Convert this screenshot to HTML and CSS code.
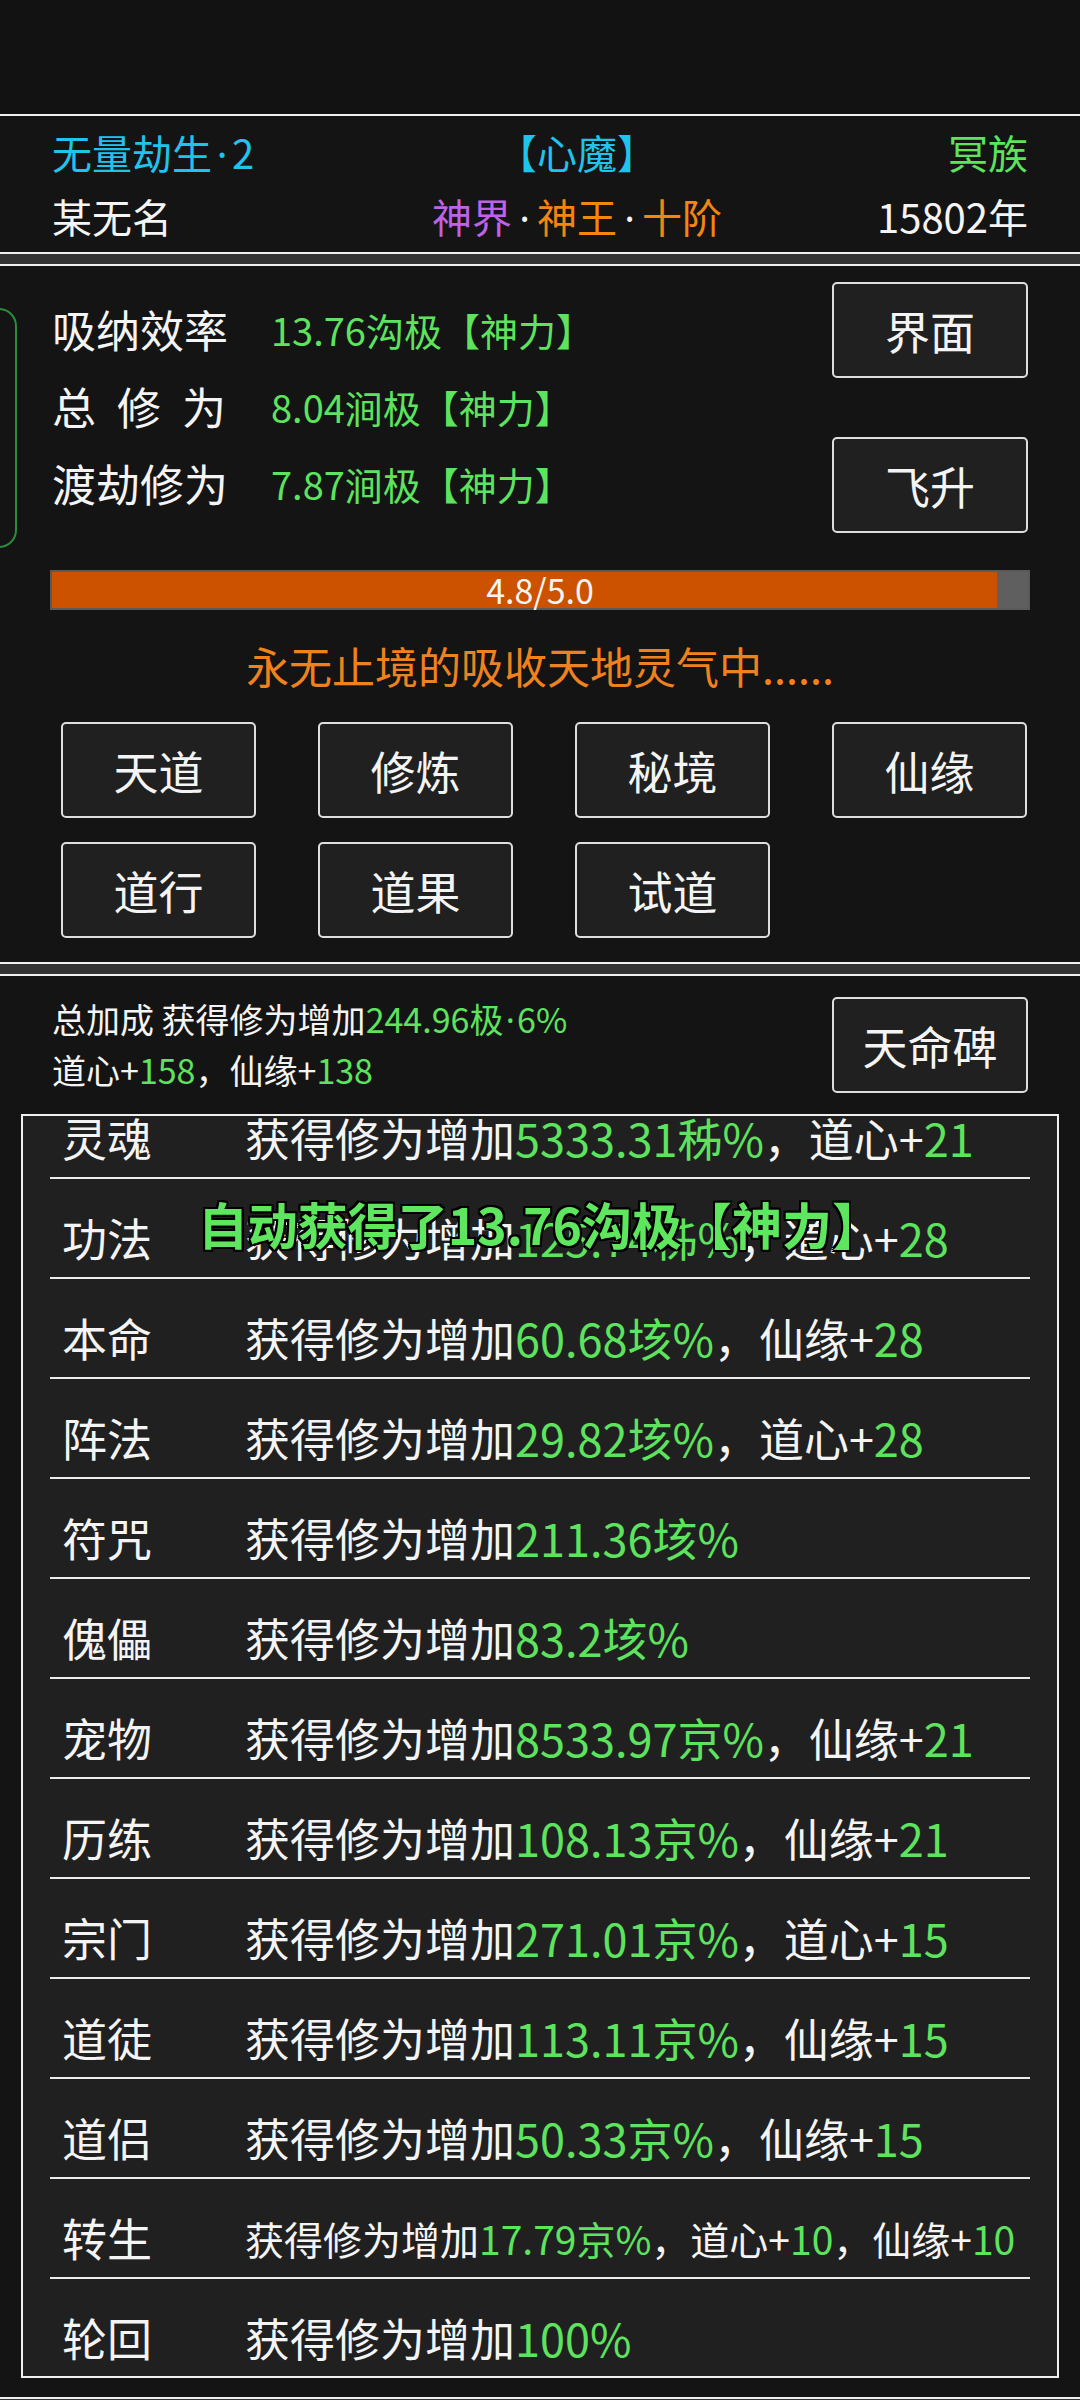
FILE: index.html
```html
<!DOCTYPE html>
<html lang="zh-CN">
<head>
  <meta charset="UTF-8">
  <title>修仙</title>
  <link rel="stylesheet" href="styles.css">
</head>
<body>
  <div class="statusbar"></div>

  <section class="panel head">
    <div class="head-row">
      <span class="cyan">无量劫生<span class="dot">·</span>2</span>
      <span class="mid cyan">【心魔】</span>
      <span class="right green">冥族</span>
    </div>
    <div class="head-row">
      <span>某无名</span>
      <span class="mid"><span class="purple">神界</span><span class="dot">·</span><span class="orange">神王</span><span class="dot">·</span><span class="orange">十阶</span></span>
      <span class="right">15802年</span>
    </div>
  </section>

  <div class="gap"></div>

  <section class="panel main">
    <div class="side-tab"></div>
    <div class="top">
      <div class="stats">
        <div class="stat"><span class="label">吸纳效率</span><span class="val">13.76沟极【神力】</span></div>
        <div class="stat"><span class="label spaced">总修为</span><span class="val">8.04涧极【神力】</span></div>
        <div class="stat"><span class="label">渡劫修为</span><span class="val">7.87涧极【神力】</span></div>
      </div>
      <div class="side-btns">
        <div class="btn">界面</div>
        <div class="btn">飞升</div>
      </div>
    </div>

    <div class="bar">
      <div class="fill" style="width: 96.8%"></div>
      <span class="bar-text">4.8/5.0</span>
    </div>

    <div class="msg">永无止境的吸收天地灵气中......</div>

    <div class="grid">
      <div class="btn">天道</div>
      <div class="btn">修炼</div>
      <div class="btn">秘境</div>
      <div class="btn">仙缘</div>
      <div class="btn">道行</div>
      <div class="btn">道果</div>
      <div class="btn">试道</div>
    </div>
  </section>

  <div class="gap"></div>

  <section class="panel bonus">
    <div class="bonus-head">
      <div class="bonus-text">
        <div>总加成 获得修为增加<span class="green">244.96极<span class="dot">·</span>6%</span></div>
        <div>道心+<span class="green">158</span>，仙缘+<span class="green">138</span></div>
      </div>
      <div class="btn">天命碑</div>
    </div>

    <div class="list-box">
      <div class="list">
        <div class="row"><span class="row-label">灵魂</span><span>获得修为增加<span class="green">5333.31秭%</span>，道心+<span class="green">21</span></span></div>
        <div class="row"><span class="row-label">功法</span><span>获得修为增加<span class="green">125.74秭%</span>，道心+<span class="green">28</span></span></div>
        <div class="row"><span class="row-label">本命</span><span>获得修为增加<span class="green">60.68垓%</span>，仙缘+<span class="green">28</span></span></div>
        <div class="row"><span class="row-label">阵法</span><span>获得修为增加<span class="green">29.82垓%</span>，道心+<span class="green">28</span></span></div>
        <div class="row"><span class="row-label">符咒</span><span>获得修为增加<span class="green">211.36垓%</span></span></div>
        <div class="row"><span class="row-label">傀儡</span><span>获得修为增加<span class="green">83.2垓%</span></span></div>
        <div class="row"><span class="row-label">宠物</span><span>获得修为增加<span class="green">8533.97京%</span>，仙缘+<span class="green">21</span></span></div>
        <div class="row"><span class="row-label">历练</span><span>获得修为增加<span class="green">108.13京%</span>，仙缘+<span class="green">21</span></span></div>
        <div class="row"><span class="row-label">宗门</span><span>获得修为增加<span class="green">271.01京%</span>，道心+<span class="green">15</span></span></div>
        <div class="row"><span class="row-label">道徒</span><span>获得修为增加<span class="green">113.11京%</span>，仙缘+<span class="green">15</span></span></div>
        <div class="row"><span class="row-label">道侣</span><span>获得修为增加<span class="green">50.33京%</span>，仙缘+<span class="green">15</span></span></div>
        <div class="row"><span class="row-label">转生</span><span class="small">获得修为增加<span class="green">17.79京%</span>，道心+<span class="green">10</span>，仙缘+<span class="green">10</span></span></div>
        <div class="row"><span class="row-label">轮回</span><span>获得修为增加<span class="green">100%</span></span></div>
      </div>
    </div>
  </section>

  <div class="toast">自动获得了13.76沟极【神力】</div>
</body>
</html>
```

FILE: styles.css
```css
* { box-sizing: border-box; }
body {
  margin: 0;
  width: 1080px;
  background: #333;
  color: #f4f4f4;
  font-family: "Noto Sans CJK SC", "Noto Sans", sans-serif;
  position: relative;
}
.statusbar { height: 114px; background: #121212; }
.gap { height: 10px; }
.panel {
  background: #141414;
  border-top: 2px solid #f0f0f0;
  border-bottom: 2px solid #f0f0f0;
}

.cyan { color: #1fc4ec; }
.green { color: #5de35d; }
.purple { color: #c062e6; }
.orange { color: #f3860f; }
.dot {
  display: inline-block;
  width: 0.5em;
  text-align: center;
  font-family: "Noto Sans", sans-serif;
  color: #f4f4f4;
}
.cyan .dot, .green .dot { color: inherit; }
.bonus-text .dot { width: 0.4em; }

/* header */
.head { padding: 5px 52px 7px; height: 140px; }
.head-row {
  display: grid;
  grid-template-columns: 275px 500px 1fr;
  font-size: 40px;
  line-height: 62px;
  white-space: nowrap;
}
.head-row .mid { text-align: center; }
.head-row .mid .dot { width: 25px; }
.head-row .right { text-align: right; }

/* main panel */
.main { position: relative; padding: 16px 50px 24px; }
.side-tab {
  position: absolute;
  left: -30px;
  top: 42px;
  width: 47px;
  height: 240px;
  border: 2px solid #2c8c3c;
  border-radius: 18px;
}
.top { display: flex; justify-content: space-between; }
.stats { margin-top: 9px; padding-left: 2px; }
.stat {
  height: 77px;
  display: flex;
  align-items: center;
  white-space: nowrap;
  line-height: 1.2;
}
.label { width: 219px; font-size: 44px; }
.label.spaced { letter-spacing: 21px; }
.val { font-size: 38px; color: #5de35d; }
.side-btns { display: flex; flex-direction: column; gap: 59px; margin-right: 2px; }

.btn {
  width: 196px;
  height: 96px;
  border: 2px solid #dedede;
  border-radius: 5px;
  background: #202020;
  display: flex;
  align-items: center;
  justify-content: center;
  font-size: 45px;
}

.bar {
  position: relative;
  margin-top: 37px;
  height: 40px;
  border: 2px solid #5a5a5a;
  background: #5f5f5f;
}
.fill { height: 100%; background: #cc5200; }
.bar-text {
  position: absolute;
  left: 0;
  right: 0;
  top: 0;
  text-align: center;
  font-size: 34px;
  line-height: 36px;
}
.msg {
  margin-top: 25px;
  text-align: center;
  font-size: 43px;
  line-height: 60px;
  color: #f0821e;
}
.grid {
  margin: 27px 0 0 11px;
  display: grid;
  grid-template-columns: repeat(4, 195px);
  column-gap: 62px;
  row-gap: 24px;
}
.grid .btn { width: 195px; }

/* bonus panel */
.bonus { padding: 21px 0 19px; }
.bonus-head {
  display: flex;
  justify-content: space-between;
  align-items: flex-start;
  height: 96px;
  padding: 0 52px;
}
.bonus-text { margin-top: -3px; font-size: 34px; line-height: 50px; white-space: nowrap; }
.list-box {
  margin: 21px 21px 0;
  height: 1264px;
  border: 2px solid #f0f0f0;
  background: #202020;
  overflow: hidden;
}
.list { margin-top: -37px; padding: 0 27px; }
.row {
  height: 100px;
  padding-top: 20px;
  border-bottom: 2px solid #ececec;
  display: flex;
  align-items: center;
  font-size: 45px;
  line-height: 1.2;
  white-space: nowrap;
}
.row-label { width: 195px; padding-left: 12px; }
.row .small { font-size: 39px; }

.toast {
  position: absolute;
  left: 0;
  top: 1193px;
  width: 1080px;
  text-align: center;
  font-size: 50px;
  line-height: 60px;
  font-weight: bold;
  color: #5ee65e;
  text-shadow: -2px -2px 0 #000, 2px -2px 0 #000, -2px 2px 0 #000, 2px 2px 0 #000, 0 2px 0 #000, 0 -2px 0 #000, 2px 0 0 #000, -2px 0 0 #000;
}
```
